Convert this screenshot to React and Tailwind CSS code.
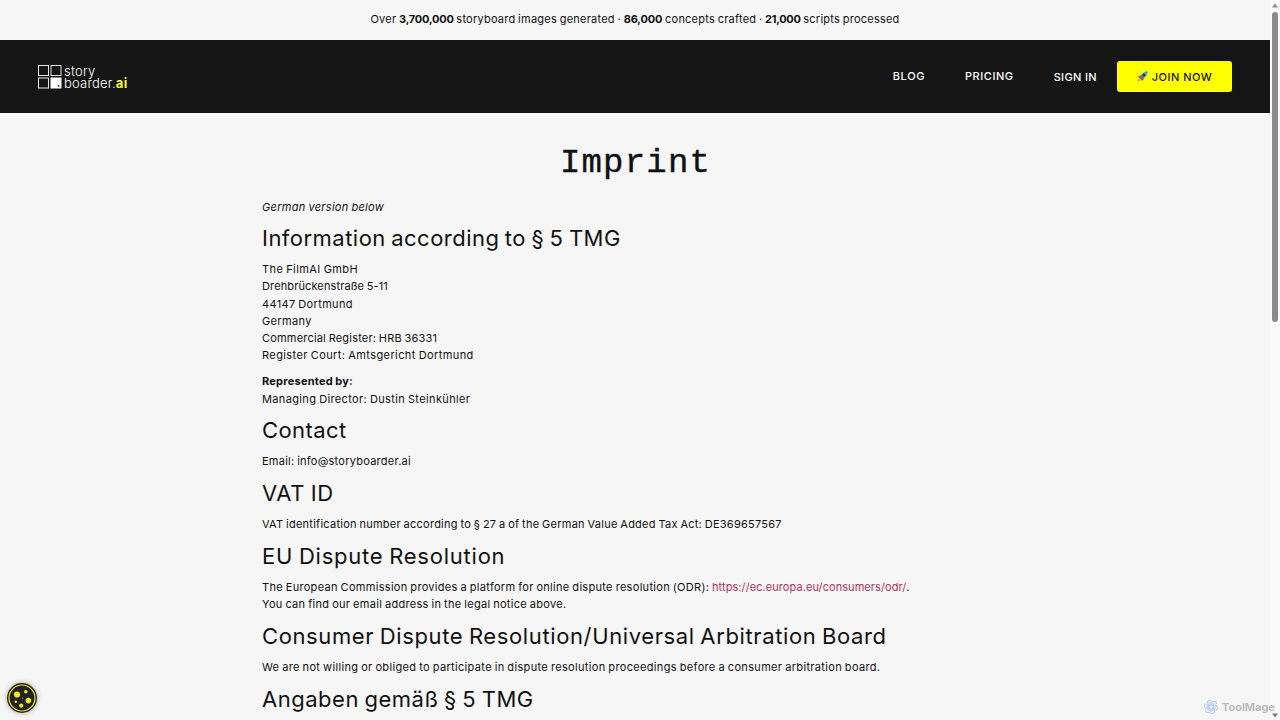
import React from "react";

const sections = [
  {
    title: { text: "Information according to § 5 TMG", spacing: "tracking-[0.475px]" },
    paragraphs: [
      [
        { text: "The FilmAI GmbH", spacing: "tracking-[0.42px]" },
        { text: "Drehbrückenstraße 5-11", spacing: "tracking-[0.12px]" },
        { text: "44147 Dortmund", spacing: "tracking-[0.34px]" },
        { text: "Germany", spacing: "tracking-[0.36px]" },
        { text: "Commercial Register: HRB 36331", spacing: "tracking-[0.19px]" },
        { text: "Register Court: Amtsgericht Dortmund", spacing: "tracking-[0.405px]" },
      ],
      [
        { text: "Represented by:", spacing: "tracking-[0.24px]", bold: true },
        { text: "Managing Director: Dustin Steinkühler", spacing: "tracking-[0.36px]" },
      ],
    ],
  },
  {
    title: { text: "Contact", spacing: "tracking-[0.41px]" },
    paragraphs: [[{ text: "Email: info@storyboarder.ai", spacing: "tracking-[0.25px]" }]],
  },
  {
    title: { text: "VAT ID", spacing: "tracking-[0.65px]" },
    paragraphs: [
      [
        {
          text: "VAT identification number according to § 27 a of the German Value Added Tax Act: DE369657567",
          spacing: "tracking-[0.245px]",
        },
      ],
    ],
  },
  {
    title: { text: "EU Dispute Resolution", spacing: "tracking-[0.77px]" },
    paragraphs: [
      [
        {
          text: "The European Commission provides a platform for online dispute resolution (ODR): ",
          spacing: "tracking-[0.305px]",
          link: "https://ec.europa.eu/consumers/odr/",
        },
        { text: "You can find our email address in the legal notice above.", spacing: "tracking-[0.3px]" },
      ],
    ],
  },
  {
    title: { text: "Consumer Dispute Resolution/Universal Arbitration Board", spacing: "tracking-[0.62px]" },
    paragraphs: [
      [
        {
          text: "We are not willing or obliged to participate in dispute resolution proceedings before a consumer arbitration board.",
          spacing: "tracking-[0.335px]",
        },
      ],
    ],
  },
  {
    title: { text: "Angaben gemäß § 5 TMG", spacing: "tracking-[0.52px]" },
    paragraphs: [],
  },
];

function Logo() {
  return (
    <a href="#" className="flex items-center text-white" aria-label="storyboarder.ai">
      <svg width="24" height="24" viewBox="0 0 24 24" fill="none" stroke="#e4e4e4">
        <rect x="0.5" y="0.5" width="10" height="10" />
        <rect x="13" y="0.5" width="10" height="10" />
        <rect x="0.5" y="13" width="10" height="10" />
        <rect x="13" y="13" width="10" height="10" fill="#fff" stroke="#fff" />
        <circle cx="20.6" cy="20.8" r="0.9" fill="#151515" stroke="none" />
      </svg>
      <div className="ml-[2px] flex flex-col text-[13px] leading-[12px] font-light">
        <span className="tracking-[0.25px]">story</span>
        <span className="tracking-[0.2px]">
          boarder.<b className="font-bold tracking-[0.4px] text-[#f8f836]">ai</b>
        </span>
      </div>
    </a>
  );
}

function Rocket() {
  return (
    <svg width="11" height="11" viewBox="0 0 22 22">
      <path d="M2 12l5-4 5 2-5 5z" fill="#d8363f" />
      <path d="M10 20l4-5-2-5-5 5z" fill="#c3303c" />
      <path d="M1 21c0-4 2-6 4-6l2 2c0 2-2 4-6 4z" fill="#ffa31a" />
      <path d="M5 14C7 7 13 1 21 1c0 8-6 14-13 16z" fill="#8fb0cc" />
      <path d="M5 14C7 10 10 6 14 3l5 5c-3 4-7 7-11 9z" fill="#54759a" />
      <path d="M15 2c2-1 4-1 6-1 0 2 0 4-1 6z" fill="#29a9ef" />
      <circle cx="14" cy="8" r="2.3" fill="#173753" />
    </svg>
  );
}

function Header() {
  return (
    <header className="flex h-[73px] shrink-0 items-center justify-between bg-[#151515] px-[38px]">
      <Logo />
      <nav className="flex items-center text-[11px] font-medium text-white">
        <a href="#" className="mr-10 tracking-[0.6px]">BLOG</a>
        <a href="#" className="mr-10 tracking-[0.55px]">PRICING</a>
        <a href="#" className="mr-5 pt-px tracking-[0.35px]">SIGN IN</a>
        <a
          href="#"
          className="flex h-[31px] w-[115px] items-center justify-center gap-1 rounded-[3px] bg-[#ffff00] tracking-[0.5px] text-[#151515]"
        >
          <Rocket />
          <span className="pt-px">JOIN NOW</span>
        </a>
      </nav>
    </header>
  );
}

function Line({ line }) {
  return (
    <span className={`block whitespace-nowrap ${line.spacing} ${line.bold ? "font-bold" : ""}`}>
      {line.text}
      {line.link && (
        <>
          <a href={line.link} className="tracking-[0.07px] text-[#b8305a]">{line.link}</a>.
        </>
      )}
    </span>
  );
}

function Scrollbar() {
  return (
    <div className="flex h-full w-[10px] flex-col items-center bg-[#fafafa]">
      <svg width="10" height="12" viewBox="0 0 10 12">
        <path d="M5 3.5L8 7.5H2z" fill="#8b8b8b" />
      </svg>
      <div className="h-[310px] w-[6px] rounded-full bg-[#8b8b8b]" />
      <svg className="mt-auto" width="10" height="12" viewBox="0 0 10 12">
        <path d="M5 9.500L8 5.500H2z" fill="#7d7d7d" />
      </svg>
    </div>
  );
}

function CookieButton() {
  return (
    <button className="fixed bottom-[7px] left-[7px] rounded-full shadow-[0_0_5px_rgba(0,0,0,0.35)]" aria-label="Cookies">
      <svg className="block" width="30" height="30" viewBox="0 0 30 30">
        <circle cx="15" cy="15" r="15" fill="#222221" />
        <circle cx="15" cy="15" r="13" fill="none" stroke="#f4e72a" strokeWidth="1.2" />
        <g fill="#f4e72a">
          <circle cx="10" cy="11.5" r="3.1" />
          <circle cx="18.8" cy="8.8" r="1.8" />
          <circle cx="21.4" cy="17.6" r="2.8" />
          <circle cx="14.2" cy="22.6" r="2.1" />
          <circle cx="8.8" cy="18.7" r="1.2" />
          <circle cx="15.7" cy="15" r="0.6" />
        </g>
      </svg>
    </button>
  );
}

function Watermark() {
  return (
    <div className="fixed right-[5px] bottom-[5px] flex items-center gap-[3px] text-[11px] leading-4 font-bold text-[#b9b9b9]">
      <svg width="16" height="16" viewBox="0 0 16 16" fill="none" stroke="#b5cbf2" strokeWidth="1.1">
        {[0, 60, 120, 180, 240, 300].map((angle) => (
          <path key={angle} d="M8 5.4L10.3 6.7V11l-3.7 2.2c-2 1-4.2-.2-4.2-2.2" transform={`rotate(${angle} 8 8)`} />
        ))}
      </svg>
      ToolMage
    </div>
  );
}

export default function App() {
  return (
    <div className="flex h-screen overflow-hidden bg-[#f6f6f6] font-['Inter',sans-serif] text-[#111]">
      <div className="flex min-w-0 flex-1 flex-col">
        <p className="flex h-10 shrink-0 items-center justify-center pb-[2px] text-[11px] tracking-[0.23px] whitespace-pre [word-spacing:-0.6px]">
          Over <b className="tracking-[-0.22px]">3,700,000</b> storyboard images generated ·{" "}
          <b className="tracking-[-0.15px]">86,000</b> concepts crafted · <b className="tracking-[-0.3px]">21,000</b> scripts processed
        </p>
        <Header />
        <main className="ml-[262px] flex w-[747px] flex-col gap-[9.5px] pt-[28px] text-[11px] leading-[17.1px] [word-spacing:-0.6px]">
          <h1 className="mb-[3px] text-center font-['Liberation_Mono',monospace] text-[34px] leading-[45px] tracking-[1.2px] [-webkit-text-stroke:0.4px_#111]">
            Imprint
          </h1>
          <p className="tracking-[0.31px] italic">German version below</p>
          {sections.map((section) => (
            <React.Fragment key={section.title.text}>
              <h2 className={`text-[22px] leading-[26.8px] whitespace-nowrap [word-spacing:-1.2px] ${section.title.spacing}`}>
                {section.title.text}
              </h2>
              {section.paragraphs.map((lines, i) => (
                <p key={i}>
                  {lines.map((line) => (
                    <Line key={line.text} line={line} />
                  ))}
                </p>
              ))}
            </React.Fragment>
          ))}
        </main>
      </div>
      <Scrollbar />
      <CookieButton />
      <Watermark />
    </div>
  );
}
